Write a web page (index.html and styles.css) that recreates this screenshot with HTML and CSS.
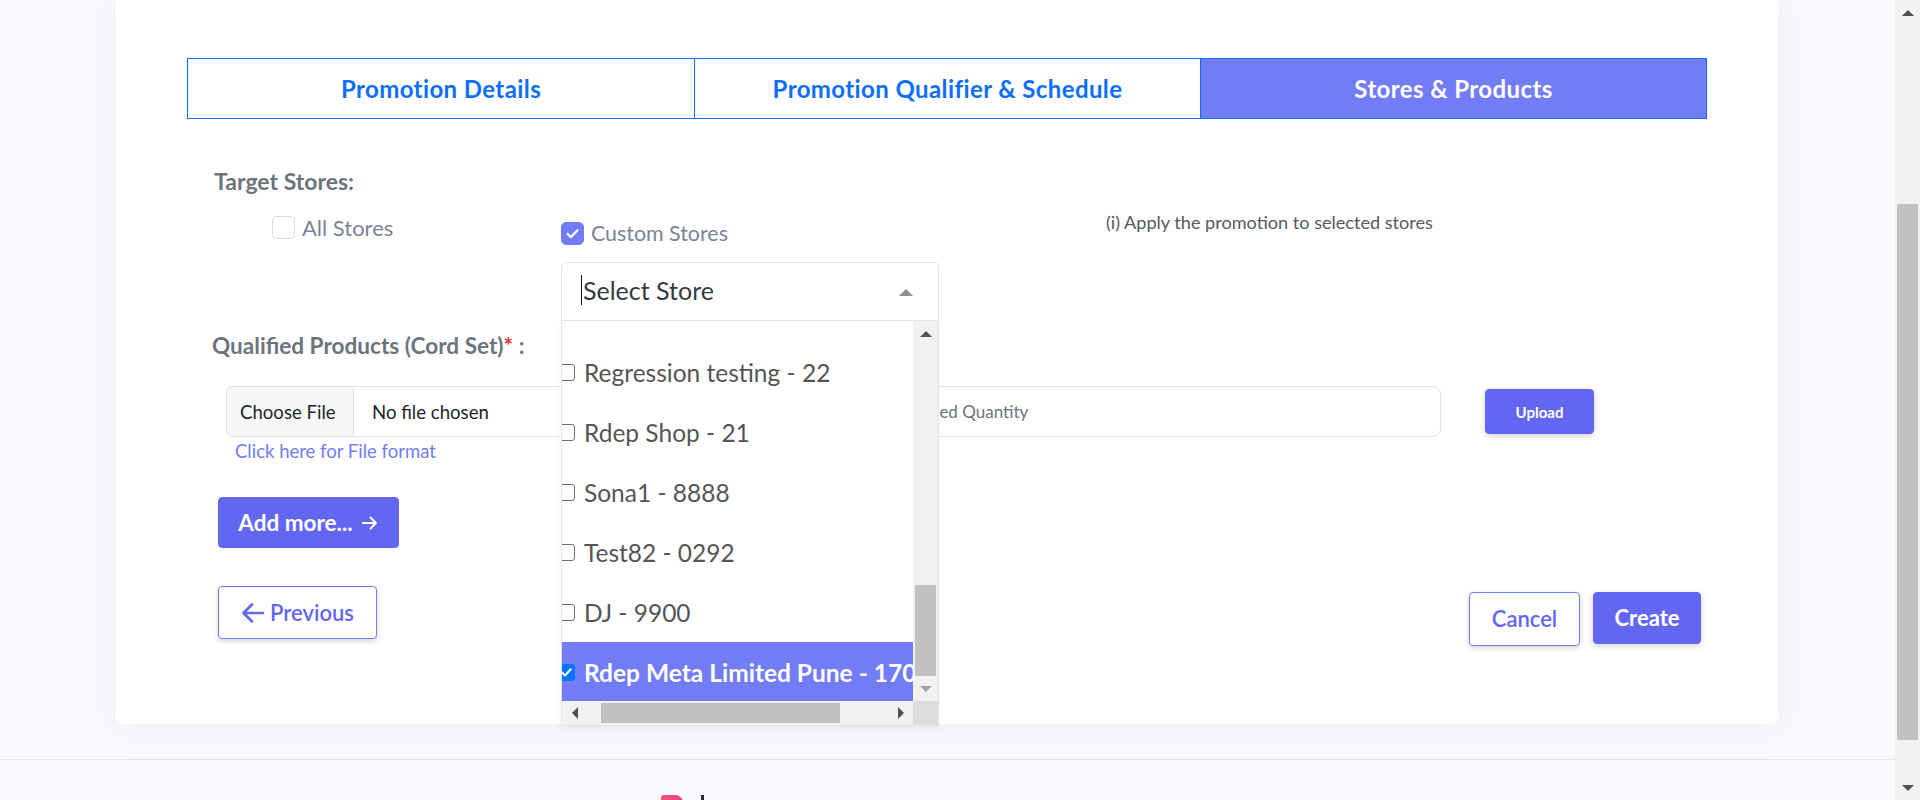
FILE: index.html
```html
<!DOCTYPE html>
<html lang="en">
<head>
<meta charset="utf-8">
<title>Stores &amp; Products</title>
<link rel="stylesheet" href="styles.css">
</head>
<body>
<div class="viewport">
  <div class="main">
    <div class="card-wrap">
      <div class="card">
        <div class="tabs">
          <div class="tab">Promotion Details</div>
          <div class="tab">Promotion Qualifier &amp; Schedule</div>
          <div class="tab active">Stores &amp; Products</div>
        </div>

        <div class="section-label target">Target Stores:</div>

        <div class="stores-row">
          <div class="col-all">
            <label class="chk"><span class="box"></span><span class="chk-text">All Stores</span></label>
          </div>
          <div class="col-custom">
            <label class="chk"><span class="box checked"><svg viewBox="0 0 24 24" width="24" height="24"><path d="M6.5 12.5l3.6 3.6 7.4-7.6" fill="none" stroke="#fff" stroke-width="2.6" stroke-linecap="round" stroke-linejoin="round"/></svg></span><span class="chk-text">Custom Stores</span></label>
            <div class="select">
              <div class="select-head">
                <span class="text-cursor"></span><span class="select-placeholder">Select Store</span>
                <span class="caret-up"></span>
              </div>
              <div class="select-list">
                <div class="list-viewport">
                  <div class="list-inner">
                    <div class="list-spacer"></div>
                    <div class="opt"><span class="cb"></span><span>Regression testing - 22</span></div>
                    <div class="opt"><span class="cb"></span><span>Rdep Shop - 21</span></div>
                    <div class="opt"><span class="cb"></span><span>Sona1 - 8888</span></div>
                    <div class="opt"><span class="cb"></span><span>Test82 - 0292</span></div>
                    <div class="opt"><span class="cb"></span><span>DJ - 9900</span></div>
                    <div class="opt selected"><span class="cb on"><svg viewBox="0 0 16 16" width="16" height="16"><path d="M3.5 8.2l3 3 6-6.6" fill="none" stroke="#fff" stroke-width="2.2" stroke-linecap="round" stroke-linejoin="round"/></svg></span><span>Rdep Meta Limited Pune - 1704</span></div>
                  </div>
                </div>
                <div class="vbar">
                  <div class="sb-btn"><span class="tri-up dark"></span></div>
                  <div class="vtrack"><div class="vthumb"></div></div>
                  <div class="sb-btn"><span class="tri-down light"></span></div>
                </div>
                <div class="hbar">
                  <div class="sb-btn-h"><span class="tri-left"></span></div>
                  <div class="htrack"><div class="hthumb"></div></div>
                  <div class="sb-btn-h"><span class="tri-right"></span></div>
                </div>
                <div class="corner"></div>
              </div>
            </div>
          </div>
          <div class="col-info">(i) Apply the promotion to selected stores</div>
        </div>

        <div class="section-label qualified">Qualified Products (Cord Set)<span class="req">*</span> :</div>

        <div class="file-row">
          <div class="file-input">
            <span class="file-btn">Choose File</span>
            <span class="file-name">No file chosen</span>
          </div>
          <div class="qty-input">Enter Qualified Quantity</div>
          <button class="btn btn-primary btn-upload">Upload</button>
        </div>
        <a class="file-link">Click here for File format</a>

        <button class="btn btn-primary btn-add">Add more... <svg class="arr" viewBox="0 0 18 18" width="18" height="18"><path d="M2 9h13M9.5 3.5L15 9l-5.5 5.5" fill="none" stroke="#fff" stroke-width="2" stroke-linecap="round" stroke-linejoin="round"/></svg></button>

        <div class="nav-row">
          <button class="btn btn-outline btn-prev"><svg class="arr-l" viewBox="0 0 24 22" width="24" height="22"><path d="M22 11H3M11 2.5L2.5 11l8.5 8.5" fill="none" stroke="#6366f1" stroke-width="2.6" stroke-linecap="round" stroke-linejoin="round"/></svg>Previous</button>
          <div class="nav-right">
            <button class="btn btn-outline btn-cancel">Cancel</button>
            <button class="btn btn-primary btn-create">Create</button>
          </div>
        </div>
      </div>
    </div>
    <footer class="footer">
      <div class="logo">
        <span class="logo-mark"></span>
        <span class="logo-bar"></span>
      </div>
    </footer>
  </div>
  <div class="page-scroll">
    <div class="ps-btn"><span class="tri-up dark"></span></div>
    <div class="ps-track"><div class="ps-thumb"></div></div>
    <div class="ps-btn"><span class="tri-down dark"></span></div>
  </div>
</div>
</body>
</html>
```

FILE: styles.css
```css
* { box-sizing: border-box; }

html, body {
  margin: 0;
  padding: 0;
}

body {
  font-family: Lato, "Open Sans", "Liberation Sans", sans-serif;
  background: #f8f9fc;
  color: #6c757d;
}

.viewport {
  display: flex;
  width: 1920px;
  height: 800px;
  overflow: hidden;
}

.main {
  flex: 1;
  display: flex;
  flex-direction: column;
  min-width: 0;
}

.card-wrap {
  padding: 0 117px 0 116px;
}

.card {
  background: #fff;
  height: 724px;
  border-radius: 0 0 7px 7px;
  box-shadow: 0 0 35px rgba(154, 161, 171, 0.12);
  padding: 58px 71px 0 71px;
}

/* tabs */
.tabs {
  display: grid;
  grid-template-columns: repeat(3, 1fr);
  height: 61px;
  border: 1px solid #0d6efd;
}

.tab {
  display: flex;
  align-items: center;
  justify-content: center;
  font-size: 24px;
  font-weight: 700;
  color: #0d6efd;
  letter-spacing: 0.4px;
}

.tab + .tab {
  border-left: 1px solid #0d6efd;
}

.tab.active {
  background: #727cf5;
  color: #fff;
}

/* labels */
.section-label {
  font-size: 23px;
  font-weight: 700;
  line-height: 26px;
  color: #6c757d;
}

.target {
  margin: 49px 0 0 27px;
}

.qualified {
  margin: 12px 0 0 25px;
  font-size: 22.6px;
}

.req {
  color: #e3342f;
}

/* store choice row */
.stores-row {
  display: grid;
  grid-template-columns: 374px 545px 1fr;
  align-items: start;
}

.col-all {
  padding-left: 85px;
  margin-top: 19px;
}

.col-custom {
  margin-top: 25px;
}

.col-info {
  margin-top: 16px;
  font-size: 18.1px;
  line-height: 24px;
  color: #555a60;
}

.chk {
  display: flex;
  align-items: center;
  gap: 7px;
  height: 28px;
}

.box {
  width: 23px;
  height: 23px;
  border: 1px solid #d8dce2;
  border-radius: 5px;
  background: #fff;
  display: flex;
  align-items: center;
  justify-content: center;
}

.box.checked {
  background: #727cf5;
  border-color: #727cf5;
}

.box svg {
  width: 21px;
  height: 21px;
}

.chk-text {
  font-size: 22px;
  color: #7b8396;
}

.col-custom .chk-text {
  font-size: 21.4px;
}

/* select */
.select {
  position: relative;
  width: 378px;
  margin-top: 15px;
}

.select-head {
  height: 59px;
  border: 1px solid #e3e6ea;
  border-radius: 5px 5px 0 0;
  display: flex;
  align-items: center;
  padding-left: 19px;
  padding-bottom: 3px;
}

.text-cursor {
  width: 1px;
  height: 30px;
  background: #111;
}

.select-placeholder {
  margin-left: 1px;
  font-size: 25px;
  color: #343a40;
}

.caret-up {
  margin-left: auto;
  margin-right: 25px;
  margin-top: 4px;
  width: 0;
  height: 0;
  border-left: 7px solid transparent;
  border-right: 7px solid transparent;
  border-bottom: 7px solid #8a8f96;
}

.select-list {
  position: absolute;
  top: 100%;
  left: 0;
  width: 100%;
  height: 405px;
  background: #fff;
  border: 1px solid #e3e6ea;
  border-top: none;
  box-shadow: 0 3px 6px rgba(0, 0, 0, 0.05);
  z-index: 5;
  display: grid;
  grid-template-columns: 1fr 25px;
  grid-template-rows: 1fr 24px;
}

.list-viewport {
  overflow: hidden;
}

.list-inner {
  margin-left: -4px;
}

.list-spacer {
  height: 21px;
}

.opt {
  height: 60px;
  display: flex;
  align-items: center;
  gap: 9px;
  white-space: nowrap;
  font-size: 24.5px;
  color: #555;
}

.opt.selected {
  background: #727cf5;
  color: #fff;
  font-weight: 700;
}

.cb {
  flex: none;
  width: 17px;
  height: 17px;
  border: 1.6px solid #6e6e6e;
  border-radius: 3px;
  background: #fff;
}

.cb.on {
  background: #0075ff;
  border-color: #0075ff;
  display: flex;
  align-items: center;
  justify-content: center;
}

.cb.on svg {
  width: 15px;
  height: 15px;
}

/* scrollbars */
.vbar {
  background: #f1f1f1;
  display: flex;
  flex-direction: column;
}

.sb-btn {
  height: 25px;
  display: flex;
  align-items: center;
  justify-content: center;
}

.vtrack {
  flex: 1;
  display: flex;
  flex-direction: column;
  justify-content: flex-end;
  padding: 0 2px;
}

.vthumb {
  height: 91px;
  background: #c1c1c1;
}

.hbar {
  background: #f1f1f1;
  display: flex;
  align-items: stretch;
}

.sb-btn-h {
  width: 25px;
  display: flex;
  align-items: center;
  justify-content: center;
}

.htrack {
  flex: 1;
  padding: 2px 0;
}

.hthumb {
  margin-left: 14px;
  width: 239px;
  height: 100%;
  background: #c1c1c1;
}

.corner {
  background: #dcdcdc;
}

.tri-up, .tri-down {
  width: 0;
  height: 0;
  border-left: 6px solid transparent;
  border-right: 6px solid transparent;
}

.tri-up { border-bottom: 6px solid #505050; }
.tri-down { border-top: 6px solid #505050; }
.tri-down.light { border-top-color: #a3a3a3; }

.tri-left, .tri-right {
  width: 0;
  height: 0;
  border-top: 6px solid transparent;
  border-bottom: 6px solid transparent;
}

.tri-left { border-right: 6px solid #505050; }
.tri-right { border-left: 6px solid #505050; }

/* file row */
.file-row {
  margin: 27px 0 0 39px;
  display: flex;
  align-items: center;
  height: 51px;
}

.file-input {
  width: 574px;
  height: 51px;
  border: 1px solid #dee2e6;
  border-radius: 6px;
  display: flex;
  align-items: stretch;
  overflow: hidden;
  font-size: 18.6px;
  color: #212529;
}

.file-btn {
  width: 127px;
  background: #f6f7f9;
  border-right: 1px solid #dee2e6;
  display: flex;
  align-items: center;
  padding-left: 13px;
}

.file-name {
  display: flex;
  align-items: center;
  padding-left: 18px;
}

.qty-input {
  margin-left: 20px;
  width: 621px;
  height: 51px;
  border: 1px solid #dee2e6;
  border-radius: 8px;
  display: flex;
  align-items: center;
  padding-left: 25px;
  font-size: 17px;
  color: #6c757d;
}

.btn {
  font-family: Lato, "Open Sans", sans-serif;
  border-radius: 4px;
  cursor: pointer;
  display: inline-flex;
  align-items: center;
  justify-content: center;
}

.btn-primary {
  background: #6366f1;
  border: 1px solid #6366f1;
  color: #fff;
  box-shadow: 0 2px 6px rgba(0, 0, 0, 0.18);
}

.btn-outline {
  background: #fff;
  border: 1px solid #727cf5;
  color: #6366f1;
  box-shadow: 0 2px 5px rgba(0, 0, 0, 0.18);
}

.btn-upload {
  margin-left: 44px;
  width: 109px;
  height: 45px;
  font-size: 15px;
  font-weight: 700;
}

.file-link {
  display: block;
  margin: 4px 0 0 48px;
  font-size: 18.5px;
  line-height: 20px;
  color: #727cf5;
}

.btn-add {
  display: flex;
  margin: 36px 0 0 31px;
  width: 181px;
  height: 51px;
  font-size: 22.5px;
  font-weight: 700;
  gap: 8px;
  box-shadow: none;
}

.nav-row {
  margin: 38px 6px 0 31px;
  display: flex;
  justify-content: space-between;
  align-items: flex-start;
}

.btn-prev {
  width: 159px;
  height: 53px;
  font-size: 22px;
  font-weight: 600;
  gap: 5px;
}

.nav-right {
  display: flex;
  gap: 13px;
  margin-top: 6px;
}

.btn-cancel {
  width: 111px;
  height: 54px;
  font-size: 22px;
  font-weight: 600;
  padding-bottom: 2px;
}

.btn-create {
  width: 108px;
  height: 52px;
  font-size: 22px;
  font-weight: 700;
  padding-bottom: 2px;
}

/* footer */
.footer {
  margin-top: 35px;
  border-top: 1px solid #e3e6ea;
  flex: 1;
  padding: 35px 0 0 661px;
  overflow: hidden;
}

.logo {
  display: flex;
  align-items: flex-start;
  gap: 18px;
}

.logo-mark {
  width: 22px;
  height: 12px;
  background: linear-gradient(90deg, #f0566f, #e83e8c);
  border-radius: 3px 8px 0 0;
}

.logo-bar {
  width: 3px;
  height: 12px;
  background: #1f2a44;
}

/* page scrollbar */
.page-scroll {
  width: 25px;
  background: #f1f1f1;
  display: flex;
  flex-direction: column;
}

.ps-btn {
  height: 25px;
  display: flex;
  align-items: center;
  justify-content: center;
}

.ps-track {
  flex: 1;
  padding: 179px 2px 0 2px;
}

.ps-thumb {
  height: 536px;
  background: #c1c1c1;
}
```
